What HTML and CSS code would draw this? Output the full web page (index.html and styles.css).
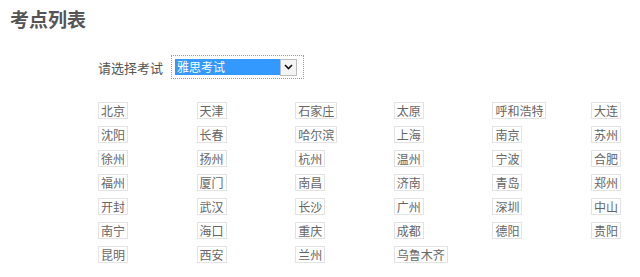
FILE: index.html
```html
<!DOCTYPE html>
<html lang="zh-CN">
<head>
    <meta charset="UTF-8">
    <title>考点列表</title>
    <link rel="stylesheet" href="styles.css">
</head>
<body>

<h1 class="page-title">考点列表</h1>

<div class="exam-select">
    <span class="exam-label">请选择考试</span>
    <div class="select-focus">
        <div class="select-box">
            <span class="select-value">雅思考试</span>
            <span class="select-arrow">
                <svg width="9" height="6" viewBox="0 0 9 6"><path d="M1 1 L4.5 4.5 L8 1" fill="none" stroke="#111" stroke-width="1.6"/></svg>
            </span>
        </div>
    </div>
</div>

<!-- city list -->
<ul class="city-list">
    <li><span>北京</span></li>
    <li><span>天津</span></li>
    <li><span>石家庄</span></li>
    <li><span>太原</span></li>
    <li><span>呼和浩特</span></li>
    <li><span>大连</span></li>
    <li><span>沈阳</span></li>
    <li><span>长春</span></li>
    <li><span>哈尔滨</span></li>
    <li><span>上海</span></li>
    <li><span>南京</span></li>
    <li><span>苏州</span></li>
    <li><span>徐州</span></li>
    <li><span>扬州</span></li>
    <li><span>杭州</span></li>
    <li><span>温州</span></li>
    <li><span>宁波</span></li>
    <li><span>合肥</span></li>
    <li><span>福州</span></li>
    <li><span>厦门</span></li>
    <li><span>南昌</span></li>
    <li><span>济南</span></li>
    <li><span>青岛</span></li>
    <li><span>郑州</span></li>
    <li><span>开封</span></li>
    <li><span>武汉</span></li>
    <li><span>长沙</span></li>
    <li><span>广州</span></li>
    <li><span>深圳</span></li>
    <li><span>中山</span></li>
    <li><span>南宁</span></li>
    <li><span>海口</span></li>
    <li><span>重庆</span></li>
    <li><span>成都</span></li>
    <li><span>德阳</span></li>
    <li><span>贵阳</span></li>
    <li><span>昆明</span></li>
    <li><span>西安</span></li>
    <li><span>兰州</span></li>
    <li><span>乌鲁木齐</span></li>
</ul>

</body>
</html>
```

FILE: styles.css
```css
body {
    margin: 0;
    font-family: "Noto Sans CJK SC", "Noto Sans", sans-serif;
    background-color: #fff;
    color: #555;
    overflow: hidden;
}
.page-title {
    margin: 0;
    padding: 8px 10px;
    font-size: 19px;
    line-height: 22px;
    font-weight: bold;
    color: #555;
}
.exam-select {
    display: flex;
    align-items: center;
    margin: 17px 0 0 98px;
}
.exam-label {
    font-size: 13px;
    color: #555;
    margin-right: 8px;
}
.select-focus {
    width: 128px;
    height: 22px;
    border: 1px dotted #999;
    display: flex;
    align-items: center;
    padding-left: 3px;
}
.select-box {
    display: flex;
    align-items: center;
    height: 17px;
    width: 122px;
}
.select-value {
    flex: 1;
    height: 16px;
    line-height: 16px;
    background-color: #3399ff;
    color: #fff;
    font-size: 12px;
    padding-left: 2px;
}
.select-arrow {
    width: 15px;
    height: 15px;
    border: 1px solid #bbb;
    background-color: #f4f4f4;
    display: flex;
    align-items: center;
    justify-content: center;
}
.city-list {
    list-style: none;
    margin: 23px 0 0 98px;
    padding: 0;
    display: grid;
    grid-template-columns: repeat(5, 98.6px) auto;
    row-gap: 7px;
}
.city-list li {
    display: flex;
}
.city-list span {
    border: 1px solid #e3e3e3;
    padding: 0 2px;
    font-size: 12px;
    line-height: 15px;
    color: #666;
}
```
